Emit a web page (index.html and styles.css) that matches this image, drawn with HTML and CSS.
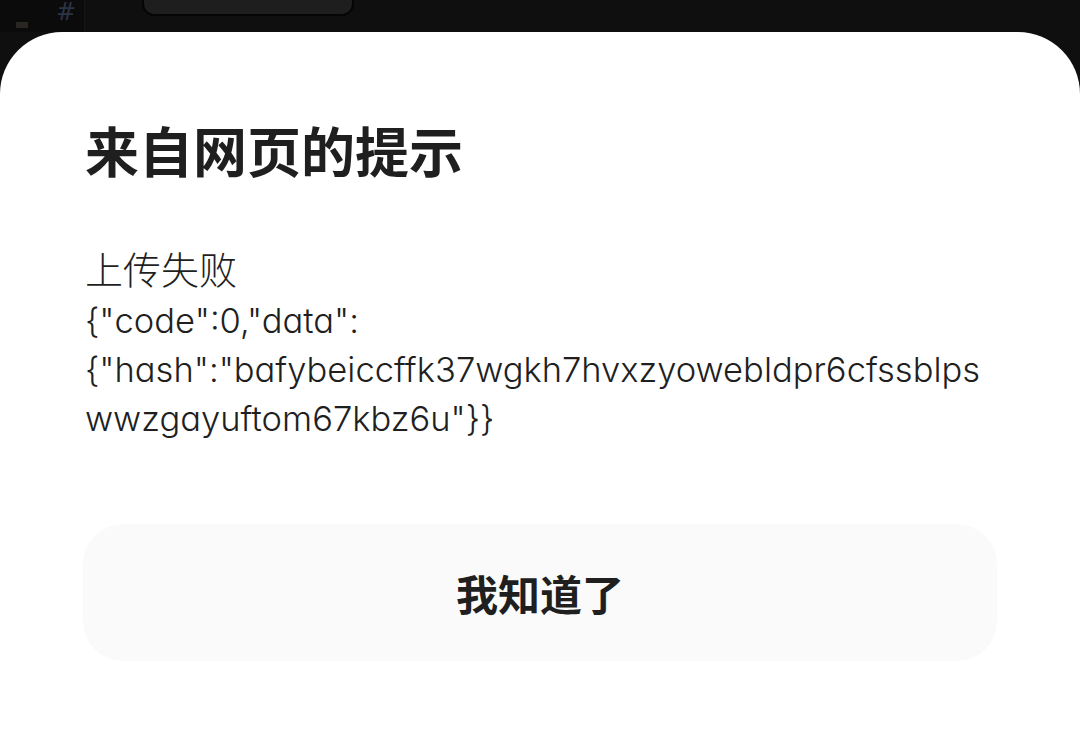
FILE: index.html
```html
<!DOCTYPE html>
<html lang="zh">
<head>
<meta charset="utf-8">
<link rel="stylesheet" href="styles.css">
</head>
<body>
<div class="backdrop">
  <div class="gutter"><span class="mark"></span><span class="hash">#</span></div>
  <div class="pill"></div>
</div>
<div class="sheet">
  <h1 class="title">来自网页的提示</h1>
  <div class="message"><span class="cjk">上传失败</span><br>{"code":0,"data":<wbr>{"hash":"bafybeiccffk37wgkh7hvxzyowebldpr6cfssblpswwzgayuftom67kbz6u"}}</div>
  <button class="ok">我知道了</button>
</div>
</body>
</html>
```
FILE: styles.css
```css
html, body {
  margin: 0;
  padding: 0;
  background: #0f0f0f;
  width: 1080px;
  height: 745px;
  overflow: hidden;
}
.backdrop {
  height: 32px;
  position: relative;
  display: flex;
}
.gutter {
  width: 84px;
  height: 100%;
  background: #0b0b0b;
  border-right: 1px solid #161616;
  position: relative;
}
.mark {
  position: absolute;
  left: 16px;
  top: 22px;
  width: 12px;
  height: 6px;
  background: #2a2621;
}
.hash {
  position: absolute;
  left: 56px;
  top: -2px;
  font-family: "DejaVu Sans", sans-serif;
  font-size: 24px;
  color: #2b3445;
}
.pill {
  position: absolute;
  left: 142px;
  top: -20px;
  width: 208px;
  height: 32px;
  background: #1e1e1e;
  border: 2px solid #050505;
  border-radius: 12px;
}
.sheet {
  background: #fff;
  border-radius: 62px 62px 0 0;
  height: 713px;
  padding: 0 85px;
  box-sizing: border-box;
  display: flex;
  flex-direction: column;
}
.title {
  margin: 86px 0 0 0;
  font-family: "Noto Sans CJK SC", sans-serif;
  font-weight: 700;
  font-size: 54px;
  line-height: 64px;
  color: #1f1f1f;
}
.message {
  margin-top: 61px;
  font-family: Inter, "Noto Sans CJK SC", sans-serif;
  font-feature-settings: "cv11" 1;
  font-size: 34.5px;
  line-height: 49px;
  font-weight: 300;
  color: #1f1f1f;
  word-break: normal;
  overflow-wrap: anywhere;
  width: 905px;
}
.cjk {
  font-family: "Noto Sans CJK SC", sans-serif;
  font-size: 38px;
}
.ok {
  margin: 81px 0 0 -2px;
  width: 914px;
  height: 137px;
  border: none;
  border-radius: 40px;
  background: #fafafa;
  font-family: "Noto Sans CJK SC", sans-serif;
  font-weight: 700;
  font-size: 42px;
  color: #1f1f1f;
  cursor: pointer;
}
```
